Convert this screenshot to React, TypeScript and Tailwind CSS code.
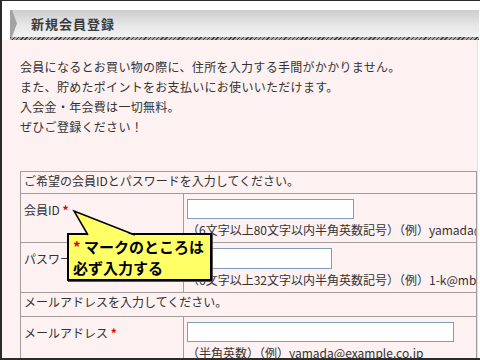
export default function App() {
  const cell = "border border-[#a39c9c] px-[3px] align-top";
  const input = "block h-[20px] border border-[#7f9db9] bg-white";
  return (
    <div className="relative h-[360px] w-[480px] overflow-hidden border-t border-l-2 border-b-2 border-[#2a2a2a] bg-white font-['Noto_Sans_CJK_JP',sans-serif] text-[12px] text-[#333]">
      {/* header */}
      <div className="pl-[8px] pr-[1px] pt-[9px]">
        <div className="flex h-[27px] items-center bg-[linear-gradient(#cdcdcd,#e8e8e8_60%,#f2f2f2)]">
          <svg width="8" height="27" viewBox="0 0 8 27" className="shrink-0">
            <polygon points="0,0 2,0 7,13.5 2,27 0,27" fill="#a3a3a3" />
          </svg>
          <h1 className="ml-[13px] text-[13px] font-bold tracking-[1px] text-[#3c3c3c]">新規会員登録</h1>
        </div>
        <div className="h-[3px] bg-[repeating-linear-gradient(135deg,#3f3f3f_0_1px,#a8a8a8_1px_3px)]" />
      </div>

      {/* body */}
      <div className="mr-[2px] h-full border-r border-[#e9dcdc] bg-[#fdf1f1] pl-[18px] pt-[17px]">
        <div className="leading-[20px] tracking-[0.3px]">
          <p>会員になるとお買い物の際に、住所を入力する手間がかかりません。</p>
          <p>また、貯めたポイントをお支払いにお使いいただけます。</p>
          <p>入会金・年会費は一切無料。</p>
          <p>ぜひご登録ください！</p>
        </div>

        <table className="mt-[34px] w-[457px] table-fixed border-collapse">
          <colgroup>
            <col className="w-[163px]" />
            <col />
          </colgroup>
          <tbody>
            <tr>
              <td colSpan={2} className={cell + " h-[22px] align-middle"}>
                ご希望の会員IDとパスワードを入力してください。
              </td>
            </tr>
            <tr>
              <td className={cell + " pt-[7px]"}>
                会員ID <span className="font-bold text-[#e00000]">*</span>
              </td>
              <td className={cell + " overflow-hidden whitespace-nowrap pt-[5px] pb-[4px]"}>
                <div className={input + " w-[167px]"} />
                <div className="mt-[3px] leading-[16px]">（6文字以上80文字以内半角英数記号）（例）yamada@example.co.jp</div>
              </td>
            </tr>
            <tr>
              <td className={cell + " pt-[7px]"}>
                パスワード <span className="font-bold text-[#e00000]">*</span>
              </td>
              <td className={cell + " overflow-hidden whitespace-nowrap pt-[5px] pb-[4px]"}>
                <div className={input + " w-[145px] h-[21px]"} />
                <div className="mt-[3px] leading-[16px]">（6文字以上32文字以内半角英数記号）（例）1-k@mb!</div>
              </td>
            </tr>
            <tr>
              <td colSpan={2} className={cell + " h-[24px] align-middle"}>
                メールアドレスを入力してください。
              </td>
            </tr>
            <tr>
              <td className={cell + " pt-[7px]"}>
                メールアドレス <span className="font-bold text-[#e00000]">*</span>
              </td>
              <td className={cell + " overflow-hidden whitespace-nowrap pt-[5px] pb-[4px]"}>
                <div className={input + " w-[267px]"} />
                <div className="mt-[3px] leading-[16px]">（半角英数）（例）yamada@example.co.jp</div>
              </td>
            </tr>
          </tbody>
        </table>
      </div>

      {/* callout */}
      <div className="absolute left-[65px] top-[232px] h-[48px] w-[145px] border-2 border-black bg-[#ffff66] pl-[4px] pt-[1px] text-[15px] font-bold leading-[21px] text-black shadow-[1px_1px_0_#555]">
        <p>
          <span className="text-[#e00000]">*</span> マークのところは
        </p>
        <p>必ず入力する</p>
      </div>
      <svg className="absolute left-[68px] top-[204px]" width="72" height="34" viewBox="0 0 72 34">
        <polygon points="4,6 18,31 65,31" fill="#ffff66" />
        <polyline points="18,30 4,6 65,30" fill="none" stroke="#000" strokeWidth="1.5" />
      </svg>
    </div>
  );
}
